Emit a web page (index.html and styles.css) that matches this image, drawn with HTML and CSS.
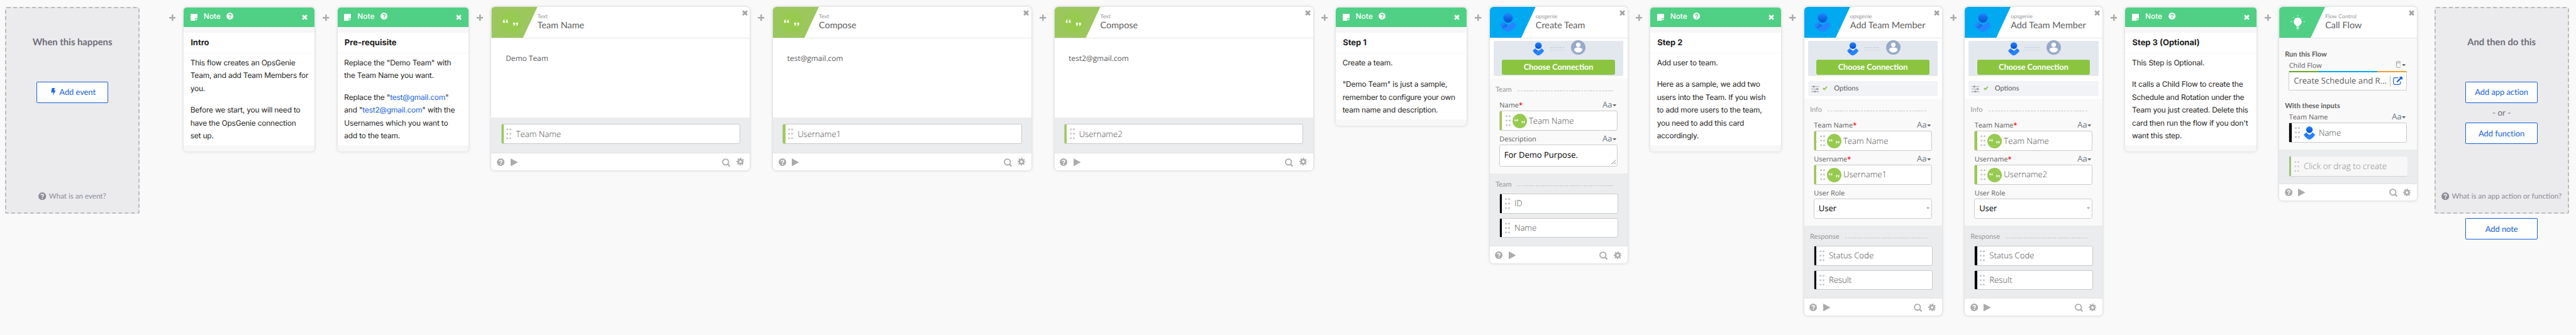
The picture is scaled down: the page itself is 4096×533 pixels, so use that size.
FILE: index.html
```html
<!DOCTYPE html>
<html lang="en">
<head>
<meta charset="utf-8">
<title>Flow editor</title>
<link rel="stylesheet" href="styles.css">
</head>
<body>
<svg class="defs" aria-hidden="true">
  <defs>
    <linearGradient id="g-head" x1="0" y1="0" x2="0" y2="1"><stop offset="0" stop-color="#2684ff"/><stop offset="1" stop-color="#0052cc"/></linearGradient>
    <linearGradient id="g-wing" x1="0" y1="0" x2="1" y2=".6"><stop offset="0" stop-color="#2684ff"/><stop offset=".4" stop-color="#2684ff"/><stop offset="1" stop-color="#0f5bd6"/></linearGradient>
    <symbol id="plus" viewBox="0 0 11 11"><path d="M5.5 0v11M0 5.5h11" stroke="#ababab" stroke-width="2.6"/></symbol>
    <symbol id="close" viewBox="0 0 10 10"><path d="M1.3 1.3l7.4 7.4M8.7 1.3L1.3 8.7" stroke="currentColor" stroke-width="3.1"/></symbol>
    <symbol id="help" viewBox="0 0 13 13"><circle cx="6.5" cy="6.5" r="6.4" fill="currentColor"/><path d="M4.5 5.1C4.5 2.6 8.6 2.6 8.6 5 8.6 6.5 6.6 6.4 6.6 8" fill="none" stroke="var(--hole)" stroke-width="1.7"/><circle cx="6.6" cy="9.9" r="1.05" fill="var(--hole)"/></symbol>
    <symbol id="play" viewBox="0 0 12 13"><path d="M0 0l12 6.5L0 13z" fill="#ababab"/></symbol>
    <symbol id="search" viewBox="0 0 14 14"><circle cx="6" cy="6" r="4.9" fill="none" stroke="#ababab" stroke-width="1.9"/><path d="M9.4 9.4l3.8 3.9" stroke="#ababab" stroke-width="2.2"/></symbol>
    <symbol id="gear" viewBox="0 0 13 13"><circle cx="6.5" cy="6.5" r="3.4" fill="none" stroke="#ababab" stroke-width="2.6"/><circle cx="6.5" cy="6.5" r="5.3" fill="none" stroke="#ababab" stroke-width="2.2" stroke-dasharray="2.1 2.063" stroke-dashoffset="1.05"/></symbol>
    <symbol id="note" viewBox="0 0 12 12"><path d="M0 0h12v7.6H8V12H0z" fill="#fff"/><path d="M9 8.7h3L9 11.8z" fill="#fff"/></symbol>
    <symbol id="dots" viewBox="0 0 8.4 18.4"><g fill="#c2c2c2"><circle cx="1.7" cy="1.8" r="1.6"/><circle cx="6.7" cy="1.8" r="1.6"/><circle cx="1.7" cy="9.2" r="1.6"/><circle cx="6.7" cy="9.2" r="1.6"/><circle cx="1.7" cy="16.6" r="1.6"/><circle cx="6.7" cy="16.6" r="1.6"/></g></symbol>
    <symbol id="quotes" viewBox="0 0 24 24"><circle cx="12" cy="12" r="12" fill="#97cb4f"/><g fill="#fff"><circle cx="4.5" cy="11.3" r="1.2"/><circle cx="7.9" cy="11.3" r="1.2"/><path d="M3.3 11.3c0-1.6.7-2.5 2-2.9l.2.5c-.7.4-1 1-1 2zM6.7 11.3c0-1.6.7-2.5 2-2.9l.2.5c-.7.4-1 1-1 2z"/><circle cx="15.9" cy="13.2" r="1.2"/><circle cx="19.3" cy="13.2" r="1.2"/><path d="M17.1 13.2c0 1.6-.7 2.5-2 2.9l-.2-.5c.7-.4 1-1 1-2zM20.5 13.2c0 1.6-.7 2.5-2 2.9l-.2-.5c.7-.4 1-1 1-2z"/></g></symbol>
    <symbol id="ops" viewBox="0 0 27 31"><path d="M26.2 18.8c.6.3.7.8.4 1.4C24 25 19.5 29 14.2 30.8c-.5.2-.9.2-1.4 0-3-1-5.5-2.6-7.7-4.8L13.500 20c3-1.400 5.200-3.200 6.800-5.200.4-.5.8-.6 1.300-.3z" fill="#2684ff"/><path d="M.8 18.800c-.6.3-.7.800-.4 1.400 1.200 2.200 2.800 4.200 4.700 5.900L13.500 20c-3-1.400-5.200-3.200-6.800-5.200-.4-.5-.8-.6-1.300-.3z" fill="url(#g-wing)"/><circle cx="13.500" cy="7.800" r="7.800" fill="url(#g-head)"/></symbol>
    <symbol id="user" viewBox="0 0 24 24"><circle cx="12" cy="12" r="12" fill="#97a9c9"/><circle cx="12" cy="7.500" r="3.700" fill="#fff"/><path d="M5 16.300c0-2.900 3-4.300 7-4.300s7 1.400 7 4.300c-1.400 2.500-4 4-7 4s-5.600-1.500-7-4z" fill="#fff"/></symbol>
    <symbol id="link2" viewBox="0 0 24 6"><path d="M0 .8h24" stroke="#b4c0da" stroke-width="1" stroke-dasharray="3 2"/><path d="M0 5.200h24" stroke="#c9cdd6" stroke-width="1" stroke-dasharray="3 2"/></symbol>
    <symbol id="caret" viewBox="0 0 7 4"><path d="M0 0h7L3.500 4z" fill="#666"/></symbol>
    <symbol id="sliders" viewBox="0 0 13 12"><path d="M0 1.800h13M0 6h13M0 10.300h13" stroke="#a8a8a8" stroke-width="1.100"/><path d="M3 .2h2.600v3.200H3zM8.600 4.400h2.600v3.200H8.600zM4.800 8.700h2.600v3.200H4.800z" fill="#999"/></symbol>
    <symbol id="check" viewBox="0 0 8 7"><path d="M.7 3.400l2.200 2.200L7.300 1" fill="none" stroke="#8bc540" stroke-width="2"/></symbol>
    <symbol id="bulb" viewBox="0 0 24 24"><g fill="#fff"><path d="M12 4.200a6.600 6.600 0 0 1 4 11.800c-1.100.9-1.600 1.400-1.800 2.800H9.800C9.600 17.400 9.100 16.900 8 16A6.600 6.600 0 0 1 12 4.200z"/><path d="M10 19.800h4v1h-4zM10 21.600h4v1h-4zM11 23.200h2v.8h-2z"/></g><path d="M12 0v2M4.200 3.200l1.400 1.500M19.800 3.200l-1.400 1.500M0 11h2.600M21.400 11H24" stroke="#fff" stroke-width=".9"/></symbol>
    <symbol id="cyl" viewBox="0 0 8 11.500"><path d="M.6 2v7.500c0 2 6.800 2 6.800 0V2c0-1.900-6.800-1.900-6.800 0zc0 1.700 6.800 1.700 6.800 0" fill="none" stroke="#8f9296" stroke-width="1"/></symbol>
    <symbol id="ext" viewBox="0 0 16 14"><path d="M9 1.700H3.200A2.500 2.500 0 0 0 .7 4.200v6.500a2.500 2.500 0 0 0 2.500 2.500h7a2.500 2.500 0 0 0 2.500-2.500V8" fill="none" stroke="#1662dd" stroke-width="1.300"/><path d="M10.200 0H16v5.800l-2-2-6.600 6.200-1.600-1.600L12.200 2z" fill="#1662dd"/></symbol>
    <symbol id="bolt" viewBox="0 0 8 13"><path d="M2 0h4.500L5 4.300l3-.7L3.200 13l1-6.300L0 7.600z" fill="#1662dd"/></symbol>
    <symbol id="grow" viewBox="0 0 8 8"><path d="M.3 7.700L7.700.3M4.300 7.700l3.400-3.400" stroke="#555" stroke-width=".8"/></symbol>
  </defs>
</svg>

<main class="flow">
  <section class="zone zone-start">
    <h2>When this happens</h2>
    <button class="btn"><svg class="i-bolt"><use href="#bolt"/></svg>Add event</button>
    <p class="zone-help"><svg class="i-help"><use href="#help"/></svg><span>What is an event?</span></p>
  </section>

  <span class="add first"><svg><use href="#plus"/></svg></span>
  <article class="note">
    <header><svg class="i-note"><use href="#note"/></svg><span>Note</span><svg class="i-q"><use href="#help"/></svg><svg class="i-x"><use href="#close"/></svg></header>
    <h3>Intro</h3>
    <div class="text"><p>This flow creates an OpsGenie<br>Team, and add Team Members for<br>you.</p><p>Before we start, you will need to<br>have the OpsGenie connection<br>set up.</p></div>
  </article>

  <span class="add"><svg><use href="#plus"/></svg></span>
  <article class="note">
    <header><svg class="i-note"><use href="#note"/></svg><span>Note</span><svg class="i-q"><use href="#help"/></svg><svg class="i-x"><use href="#close"/></svg></header>
    <h3>Pre-requisite</h3>
    <div class="text"><p>Replace the "Demo Team" with<br>the Team Name you want.</p><p>Replace the "<a>test@gmail.com</a>"<br>and "<a>test2@gmail.com</a>" with the<br>Usernames which you want to<br>add to the team.</p></div>
  </article>

  <span class="add"><svg><use href="#plus"/></svg></span>
  <article class="card wide">
    <header class="head lime"><div class="flag"><svg class="i-quotes"><use href="#quotes"/></svg></div><div class="titles"><small>Text</small><h3>Team Name</h3></div><svg class="i-x"><use href="#close"/></svg></header>
    <div class="compose">Demo Team</div>
    <div class="outputs single"><div class="field green"><svg class="i-dots"><use href="#dots"/></svg><span>Team Name</span></div></div>
    <footer><svg class="i-help"><use href="#help"/></svg><svg class="i-play"><use href="#play"/></svg><svg class="i-search"><use href="#search"/></svg><svg class="i-gear"><use href="#gear"/></svg></footer>
  </article>

  <span class="add"><svg><use href="#plus"/></svg></span>
  <article class="card wide">
    <header class="head lime"><div class="flag"><svg class="i-quotes"><use href="#quotes"/></svg></div><div class="titles"><small>Text</small><h3>Compose</h3></div><svg class="i-x"><use href="#close"/></svg></header>
    <div class="compose">test@gmail.com</div>
    <div class="outputs single"><div class="field green"><svg class="i-dots"><use href="#dots"/></svg><span>Username1</span></div></div>
    <footer><svg class="i-help"><use href="#help"/></svg><svg class="i-play"><use href="#play"/></svg><svg class="i-search"><use href="#search"/></svg><svg class="i-gear"><use href="#gear"/></svg></footer>
  </article>

  <span class="add"><svg><use href="#plus"/></svg></span>
  <article class="card wide">
    <header class="head lime"><div class="flag"><svg class="i-quotes"><use href="#quotes"/></svg></div><div class="titles"><small>Text</small><h3>Compose</h3></div><svg class="i-x"><use href="#close"/></svg></header>
    <div class="compose">test2@gmail.com</div>
    <div class="outputs single"><div class="field green"><svg class="i-dots"><use href="#dots"/></svg><span>Username2</span></div></div>
    <footer><svg class="i-help"><use href="#help"/></svg><svg class="i-play"><use href="#play"/></svg><svg class="i-search"><use href="#search"/></svg><svg class="i-gear"><use href="#gear"/></svg></footer>
  </article>

  <span class="add"><svg><use href="#plus"/></svg></span>
  <article class="note">
    <header><svg class="i-note"><use href="#note"/></svg><span>Note</span><svg class="i-q"><use href="#help"/></svg><svg class="i-x"><use href="#close"/></svg></header>
    <h3>Step 1</h3>
    <div class="text"><p>Create a team.</p><p>"Demo Team" is just a sample,<br>remember to configure your own<br>team name and description.</p></div>
  </article>

  <span class="add"><svg><use href="#plus"/></svg></span>
  <article class="card">
    <header class="head sky"><div class="flag"><svg class="i-ops"><use href="#ops"/></svg></div><div class="titles"><small>opsgenie</small><h3>Create Team</h3></div><svg class="i-x"><use href="#close"/></svg></header>
    <div class="connect"><div class="panel"><div class="pair"><svg class="p-ops"><use href="#ops"/></svg><svg class="p-link"><use href="#link2"/></svg><svg class="p-user"><use href="#user"/></svg></div><button>Choose Connection</button></div></div>
    <div class="inputs">
      <div class="sec">Team<i></i></div>
      <div class="label"><span>Name<b>*</b></span><em>Aa</em><svg class="i-caret"><use href="#caret"/></svg></div>
      <div class="field green in"><svg class="i-dots"><use href="#dots"/></svg><svg class="i-src"><use href="#quotes"/></svg><span>Team Name</span></div>
      <div class="label"><span>Description</span><em>Aa</em><svg class="i-caret"><use href="#caret"/></svg></div>
      <div class="entry area"><span>For Demo Purpose.</span><svg class="i-grow"><use href="#grow"/></svg></div>
    </div>
    <div class="outputs">
      <div class="sec">Team<i></i></div>
      <div class="field black"><svg class="i-dots"><use href="#dots"/></svg><span>ID</span></div>
      <div class="field black"><svg class="i-dots"><use href="#dots"/></svg><span>Name</span></div>
    </div>
    <footer><svg class="i-help"><use href="#help"/></svg><svg class="i-play"><use href="#play"/></svg><svg class="i-search"><use href="#search"/></svg><svg class="i-gear"><use href="#gear"/></svg></footer>
  </article>

  <span class="add"><svg><use href="#plus"/></svg></span>
  <article class="note">
    <header><svg class="i-note"><use href="#note"/></svg><span>Note</span><svg class="i-q"><use href="#help"/></svg><svg class="i-x"><use href="#close"/></svg></header>
    <h3>Step 2</h3>
    <div class="text"><p>Add user to team.</p><p>Here as a sample, we add two<br>users into the Team. If you wish<br>to add more users to the team,<br>you need to add this card<br>accordingly.</p></div>
  </article>

  <span class="add"><svg><use href="#plus"/></svg></span>
  <article class="card">
    <header class="head sky"><div class="flag"><svg class="i-ops"><use href="#ops"/></svg></div><div class="titles"><small>opsgenie</small><h3>Add Team Member</h3></div><svg class="i-x"><use href="#close"/></svg></header>
    <div class="connect"><div class="panel"><div class="pair"><svg class="p-ops"><use href="#ops"/></svg><svg class="p-link"><use href="#link2"/></svg><svg class="p-user"><use href="#user"/></svg></div><button>Choose Connection</button></div>
      <div class="options"><svg class="i-sliders"><use href="#sliders"/></svg><svg class="i-check"><use href="#check"/></svg><span>Options</span></div></div>
    <div class="inputs">
      <div class="sec">Info<i></i></div>
      <div class="label"><span>Team Name<b>*</b></span><em>Aa</em><svg class="i-caret"><use href="#caret"/></svg></div>
      <div class="field green in"><svg class="i-dots"><use href="#dots"/></svg><svg class="i-src"><use href="#quotes"/></svg><span>Team Name</span></div>
      <div class="label"><span>Username<b>*</b></span><em>Aa</em><svg class="i-caret"><use href="#caret"/></svg></div>
      <div class="field green in"><svg class="i-dots"><use href="#dots"/></svg><svg class="i-src"><use href="#quotes"/></svg><span>Username1</span></div>
      <div class="label"><span>User Role</span></div>
      <div class="entry"><span>User</span><svg class="i-drop"><use href="#caret"/></svg></div>
    </div>
    <div class="outputs">
      <div class="sec">Response<i></i></div>
      <div class="field black"><svg class="i-dots"><use href="#dots"/></svg><span>Status Code</span></div>
      <div class="field black"><svg class="i-dots"><use href="#dots"/></svg><span>Result</span></div>
    </div>
    <footer><svg class="i-help"><use href="#help"/></svg><svg class="i-play"><use href="#play"/></svg><svg class="i-search"><use href="#search"/></svg><svg class="i-gear"><use href="#gear"/></svg></footer>
  </article>

  <span class="add"><svg><use href="#plus"/></svg></span>
  <article class="card">
    <header class="head sky"><div class="flag"><svg class="i-ops"><use href="#ops"/></svg></div><div class="titles"><small>opsgenie</small><h3>Add Team Member</h3></div><svg class="i-x"><use href="#close"/></svg></header>
    <div class="connect"><div class="panel"><div class="pair"><svg class="p-ops"><use href="#ops"/></svg><svg class="p-link"><use href="#link2"/></svg><svg class="p-user"><use href="#user"/></svg></div><button>Choose Connection</button></div>
      <div class="options"><svg class="i-sliders"><use href="#sliders"/></svg><svg class="i-check"><use href="#check"/></svg><span>Options</span></div></div>
    <div class="inputs">
      <div class="sec">Info<i></i></div>
      <div class="label"><span>Team Name<b>*</b></span><em>Aa</em><svg class="i-caret"><use href="#caret"/></svg></div>
      <div class="field green in"><svg class="i-dots"><use href="#dots"/></svg><svg class="i-src"><use href="#quotes"/></svg><span>Team Name</span></div>
      <div class="label"><span>Username<b>*</b></span><em>Aa</em><svg class="i-caret"><use href="#caret"/></svg></div>
      <div class="field green in"><svg class="i-dots"><use href="#dots"/></svg><svg class="i-src"><use href="#quotes"/></svg><span>Username2</span></div>
      <div class="label"><span>User Role</span></div>
      <div class="entry"><span>User</span><svg class="i-drop"><use href="#caret"/></svg></div>
    </div>
    <div class="outputs">
      <div class="sec">Response<i></i></div>
      <div class="field black"><svg class="i-dots"><use href="#dots"/></svg><span>Status Code</span></div>
      <div class="field black"><svg class="i-dots"><use href="#dots"/></svg><span>Result</span></div>
    </div>
    <footer><svg class="i-help"><use href="#help"/></svg><svg class="i-play"><use href="#play"/></svg><svg class="i-search"><use href="#search"/></svg><svg class="i-gear"><use href="#gear"/></svg></footer>
  </article>

  <span class="add"><svg><use href="#plus"/></svg></span>
  <article class="note">
    <header><svg class="i-note"><use href="#note"/></svg><span>Note</span><svg class="i-q"><use href="#help"/></svg><svg class="i-x"><use href="#close"/></svg></header>
    <h3>Step 3 (Optional)</h3>
    <div class="text"><p>This Step is Optional.</p><p>It calls a Child Flow to create the<br>Schedule and Rotation under the<br>Team you just created. Delete this<br>card then run the flow if you don't<br>want this step.</p></div>
  </article>

  <span class="add"><svg><use href="#plus"/></svg></span>
  <article class="card">
    <header class="head mint"><div class="flag"><svg class="i-bulb"><use href="#bulb"/></svg></div><div class="titles"><small>Flow Control</small><h3>Call Flow</h3></div><svg class="i-x"><use href="#close"/></svg></header>
    <div class="inputs call">
      <h4>Run this Flow</h4>
      <div class="label"><span>Child Flow</span><svg class="i-cyl"><use href="#cyl"/></svg><svg class="i-caret"><use href="#caret"/></svg></div>
      <div class="picker"><span>Create Schedule and R...</span><svg class="i-ext"><use href="#ext"/></svg></div>
      <h4 class="second">With these inputs</h4>
      <div class="label"><span>Team Name</span><em>Aa</em><svg class="i-caret"><use href="#caret"/></svg></div>
      <div class="field black in"><svg class="i-dots"><use href="#dots"/></svg><svg class="i-srcops"><use href="#ops"/></svg><span>Name</span></div>
    </div>
    <div class="outputs empty"><div class="field ghost"><svg class="i-dots"><use href="#dots"/></svg><span>Click or drag to create</span></div></div>
    <footer><svg class="i-help"><use href="#help"/></svg><svg class="i-play"><use href="#play"/></svg><svg class="i-search"><use href="#search"/></svg><svg class="i-gear"><use href="#gear"/></svg></footer>
  </article>

  <div class="end">
    <section class="zone">
      <h2>And then do this</h2>
      <button class="btn">Add app action</button>
      <span class="or">- or -</span>
      <button class="btn">Add function</button>
      <p class="zone-help"><svg class="i-help"><use href="#help"/></svg><span>What is an app action or function?</span></p>
    </section>
    <button class="btn">Add note</button>
  </div>
</main>
</body>
</html>
```
FILE: styles.css
```css
* { box-sizing: border-box; margin: 0; padding: 0; }
html { background: #f9f9f9; overflow: hidden; }
body { zoom: 0.96105; background: #f9f9f9; color: #5e5e5e; font-family: Lato, "Open Sans", sans-serif; overflow: hidden; text-rendering: geometricPrecision; }
svg { display: block; flex: none; }
.defs { position: absolute; width: 0; height: 0; }
button { font: inherit; border: 0; text-rendering: inherit; }

.flow { display: flex; align-items: flex-start; width: 4262px; height: 555px; padding: 11.3px 0 0 8.3px; white-space: nowrap; }
.flow > * { flex: none; }

/* drop zones */
.zone { display: flex; flex-direction: column; align-items: center; width: 222.8px; height: 341.4px; margin-top: .6px; background: #ebebed; border: 2.1px dashed #bcbcbc; border-radius: 3px; }
.zone h2 { margin-top: 45px; font-size: 15.4px; line-height: 22px; font-weight: 700; color: #6e6e78; height: 22px; }
.zone h2 + .btn { margin-top: 54.3px; }
.btn { display: flex; align-items: center; justify-content: center; width: 119px; height: 35.2px; padding-bottom: 1.4px; background: #fff; border: 1px solid #1662dd; border-radius: 2px; color: #1662dd; font-size: 13.5px; letter-spacing: -.08px; }
.zone-start .btn { padding-left: 3px; }
.i-bolt { width: 8px; height: 13px; margin-right: 6px; }
.or { font-size: 14px; line-height: 32.8px; height: 32.8px; color: #6e6e78; }
.zone-help { display: flex; align-items: center; gap: 4px; margin-top: auto; margin-bottom: 17px; height: 17px; font-size: 12.1px; color: #8c8c96; --hole: #ebebed; }
.zone-help .i-help { width: 13px; height: 13px; margin-bottom: 1px; }
.zone-help span { line-height: 17px; }
.end { display: flex; flex-direction: column; align-items: center; gap: 8.1px; margin-left: 28.8px; }

/* connectors */
.add { display: flex; justify-content: center; width: 38.1px; padding-top: 12.7px; }
.add.first { margin-left: 34.8px; }
.add svg { width: 11px; height: 11px; }

/* notes */
.note { width: 216.5px; margin-top: .7px; padding-bottom: 10px; background: #f7f7f7; border-radius: 5px; overflow: hidden; box-shadow: 0 0 5px rgba(0, 0, 0, .17); font-family: Inter, sans-serif; color: #1d1d21; }
.note header { display: flex; height: 32.7px; padding: 0 11.2px 0 11px; background: #4fd084; color: #fff; margin-bottom: 9.3px; --hole: #4fd084; }
.i-note { width: 11.6px; height: 11.6px; margin-top: 10.5px; }
.note header span { font-size: 12.4px; line-height: 16px; margin: 6.7px 9.8px 0 10.2px; font-weight: 500; width: 28.3px; }
.i-q { width: 11.6px; height: 11.6px; margin-top: 8.6px; }
.note .i-x { width: 9.4px; height: 9.4px; margin: 12px 0 0 auto; }
.note h3 { height: 34.5px; line-height: 34.5px; padding-left: 11.5px; background: #fff; border-bottom: 1px solid #f6f6f6; font-size: 13.5px; font-weight: 700; }
.text { padding: 5px 0 5px 11px; background: #fff; font-size: 12.4px; line-height: 21.25px; letter-spacing: -.19px; }
.text p + p { margin-top: 14.6px; }
.text a { color: #1662dd; }

/* action cards */
.card { width: 227.6px; background: #fff; border-radius: 6px; overflow: hidden; box-shadow: 0 0 5px rgba(0, 0, 0, .19); }
.card.wide { width: 427.6px; }
.head { display: flex; height: 52.4px; border-bottom: 1px solid #e3e3e3; }
.flag { width: 76px; height: 51.4px; clip-path: polygon(0 0, 100% 0, 52px 100%, 0 100%); }
.lime .flag { background: #9bc75d; }
.sky .flag { background: #00a9f0; }
.mint .flag { background: #4fd084; }
.i-ops { width: 27px; height: 31px; margin: 10.6px 0 0 17px; }
.i-quotes { width: 35px; height: 35px; margin: 8.4px 0 0 14px; }
.i-bulb { width: 24px; height: 24px; margin: 14px 0 0 18.4px; }
.titles { padding-top: 10.5px; }
.titles small { display: block; font-size: 9.2px; line-height: 11px; height: 11px; color: #999; }
.titles h3 { font-size: 15px; line-height: 18px; font-weight: 400; }
.card .head .i-x { width: 9.6px; height: 9.6px; margin: 5.5px 3.5px 0 auto; color: #a3a3a3; }
.compose { height: 130.7px; padding: 25px 0 0 23.7px; font: 12.4px/17px "Open Sans", sans-serif; color: #5b5b5b; }
.connect { padding: 4.2px 6.3px 3.8px; }
.panel { height: 58.3px; padding: 0 14.2px; background: #e3e8ef; border-radius: 2px; }
.pair { display: flex; justify-content: space-between; width: 87.5px; height: 30.7px; margin-left: 51px; }
.p-ops { width: 19px; height: 22.5px; margin-top: 2px; }
.p-link { width: 24px; height: 6px; margin: 10px 0 0 -1px; }
.p-user { width: 24px; height: 24px; margin-top: -1.5px; }
.panel button { display: block; width: 186.5px; height: 25px; background: #8bc540; border-radius: 3px; color: #fff; font-size: 13.2px; line-height: 24px; font-weight: 700; }
.options { display: flex; align-items: center; height: 25.4px; margin-top: 8px; padding: 0 0 2px 5.4px; background: #f2f3f7; border-radius: 2px; font-size: 11.5px; }
.i-sliders { width: 13px; height: 12px; margin-top: 2.5px; }
.i-check { width: 8px; height: 7px; margin: 0 10.8px 0 6px; }

.inputs { padding: 10.6px 0 11.7px 15.7px; background: #f9f9f9; }
.sec { display: flex; align-items: center; gap: 9.5px; height: 16px; margin-left: -6.2px; line-height: 16px; font-size: 11.6px; color: #999; }
.sec i { flex: 1; height: 1px; margin: 4px 23.5px 0 0; background: repeating-linear-gradient(90deg, #c8c8c8 0 3.5px, transparent 3.5px 5px); }
.inputs .sec { margin-bottom: 4.1px; }
.label { display: flex; width: 195.5px; height: 22.6px; padding: 5.8px 1.3px 0 .5px; font: 11.4px/16.8px "Open Sans", sans-serif; }
.label span { flex: 1; }
.label b { color: #f00; font-weight: 600; }
.label em { font: 13.6px/14px "Open Sans", sans-serif; color: #6d7885; }
.i-caret { width: 6.8px; height: 3.6px; margin: 6.5px 0 0 .6px; }
.i-cyl { width: 8px; height: 11.5px; margin: 0 1.5px 0 0; }
.call .i-cyl + .i-caret { margin-top: 5.5px; }
.field { display: flex; align-items: center; height: 32.7px; background: #fff; border: 1px solid #c9c9c9; border-radius: 3px; font: 300 13.7px/20px "Open Sans", sans-serif; color: #4c4c4c; }
.field::before { content: ""; width: 3.6px; height: 100%; margin-right: 4.6px; background: #9bcb50; }
.field.black::before { background: #000; }
.field .i-dots { width: 8.4px; height: 18.4px; margin-right: 7.4px; }
.in { width: 195.7px; height: 33.4px; }
.in::before { margin-right: 5.6px; }
.in .i-dots { margin-right: 3px; }
.i-src { width: 24px; height: 24px; margin-right: 3.4px; }
.i-srcops { width: 19px; height: 22px; margin: 0 6px 0 3px; }
.entry { display: flex; justify-content: space-between; align-items: center; width: 195.5px; height: 33px; padding: 0 3px 0 7.2px; background: #fff; border: 1px solid #ccc; border-radius: 3px; font: 13.55px/20px "Open Sans", sans-serif; color: #000; }
.entry.area { height: 36px; padding: 0 1px 2px 7.2px; }
.i-grow { width: 8px; height: 8px; align-self: flex-end; }
.i-drop { width: 5.5px; height: 4.5px; opacity: .6; margin-bottom: 2px; }

.outputs { display: grid; gap: 7.3px; padding: 10.6px 15.2px 13.7px 15.7px; background: #ebecee; }
.outputs .sec { margin-right: -15.2px; }
.outputs.single { padding: 10.8px 15.7px 14.6px; }
.outputs.single .field { height: 33.4px; }
.outputs.empty { padding: 11.7px 16px 12px; }
.field.ghost { height: 32px; background: #f7f7f7; border: 0; color: #8c8c8c; border-radius: 2px; font-size: 14px; box-shadow: 0 1px 1px rgba(0, 0, 0, .1); }
.field.ghost::before { background: #9bc477; width: 4px; }
.ghost .i-dots { opacity: .7; }

.call { padding-top: 18.3px; padding-bottom: 11.3px; }
.call h4 { height: 16px; margin-left: -6.3px; font-size: 11.5px; line-height: 16px; }
.call h4 + .label { height: 19.3px; padding-top: 2.5px; }
.call h4.second { margin-top: 17.8px; }
.picker { display: flex; align-items: center; width: 195.3px; height: 32.7px; padding: 2.3px 6px 0 7.2px; background: linear-gradient(90deg, #6aa620 0 49.3px, #00a9ef 49.3px 147px, #f29b38 147px) 0 0 / 100% 2.3px no-repeat border-box, #fff; border: 1px solid #ccc; border-top: 0; border-radius: 0 0 2px 2px; font: 13.65px/18px "Open Sans", sans-serif; }
.picker span { flex: 1; border-right: 1px solid #bbb; margin-right: 4.5px; }
.i-ext { width: 15.7px; height: 13.6px; }

.card footer { display: flex; align-items: center; height: 29px; padding: 0 9.5px 0 9px; border-top: 1px solid #e3e3e3; color: #ababab; --hole: #fff; }
.card footer .i-help { width: 12.7px; height: 12.7px; margin-top: 1px; }
.i-play { width: 12px; height: 13px; margin: 1px 0 0 9.6px; }
.i-search { width: 14px; height: 14px; margin: 2px 9.5px 0 auto; }
.i-gear { width: 13px; height: 13px; }
```
